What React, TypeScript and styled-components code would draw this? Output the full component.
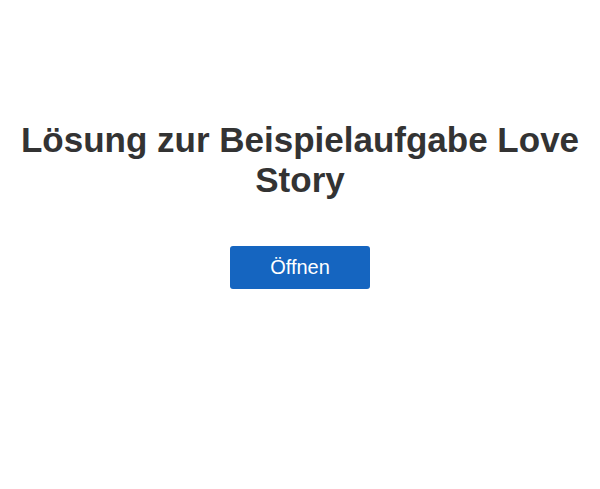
import React from 'react';
import styled, {createGlobalStyle} from 'styled-components';

const GlobalStyle = createGlobalStyle`
  html, body {
    margin: 0;
    padding: 0;
    background: #ffffff;
  }
  body {
    font-family: "Liberation Sans", Arial, sans-serif;
  }
`;

const Page = styled.div`
  display: flex;
  flex-direction: column;
  align-items: center;
  padding: 120px 16px 0;
`;

const Title = styled.h1`
  margin: 0;
  font-size: 35px;
  line-height: 40px;
  font-weight: 700;
  color: #333333;
  text-align: center;
`;

const OpenButton = styled.button`
  margin-top: 46px;
  width: 140px;
  height: 43px;
  border: none;
  border-radius: 3px;
  background: #1565c0;
  color: #ffffff;
  font-family: "Liberation Sans", Arial, sans-serif;
  font-size: 20px;
  cursor: pointer;
`;

export default function App() {
  return (
    <>
      <GlobalStyle />
      <Page>
        <Title>Lösung zur Beispielaufgabe Love Story</Title>
        <OpenButton>Öffnen</OpenButton>
      </Page>
    </>
  );
}
